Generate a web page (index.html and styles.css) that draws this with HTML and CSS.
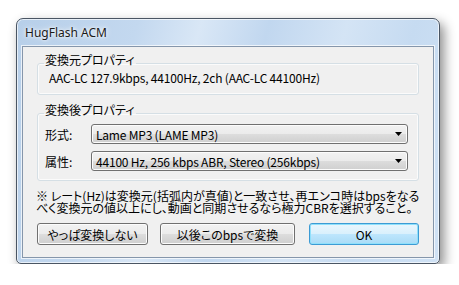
FILE: index.html
```html
<!DOCTYPE html>
<html lang="ja">
<head>
    <meta charset="UTF-8">
    <title>HugFlash ACM</title>
    <link rel="stylesheet" href="styles.css">
</head>
<body>
<div class="window">
    <div class="titlebar">HugFlash ACM</div>
    <div class="client">
        <fieldset class="group src">
            <legend>変換元プロパティ</legend>
            <div class="value">AAC-LC 127.9kbps, 44100Hz, 2ch (AAC-LC 44100Hz)</div>
        </fieldset>
        <fieldset class="group dst">
            <legend>変換後プロパティ</legend>
            <div class="row">
                <span class="label">形式:</span>
                <div class="combo">
                    <span>Lame MP3 (LAME MP3)</span>
                    <svg width="7" height="4" viewBox="0 0 7 4"><path d="M0 0h7L3.5 4z" fill="#000"/></svg>
                </div>
            </div>
            <div class="row">
                <span class="label">属性:</span>
                <div class="combo">
                    <span>44100 Hz, 256 kbps ABR, Stereo (256kbps)</span>
                    <svg width="7" height="4" viewBox="0 0 7 4"><path d="M0 0h7L3.5 4z" fill="#000"/></svg>
                </div>
            </div>
        </fieldset>
        <p class="note">※ レート(Hz)は変換元(括弧内が真値)と一致させ、再エンコ時はbpsをなる<br>べく変換元の値以上にし、動画と同期させるなら極力CBRを選択すること。</p>
        <div class="buttons">
            <button class="btn cancel">やっぱ変換しない</button>
            <button class="btn always">以後このbpsで変換</button>
            <button class="btn ok">OK</button>
        </div>
    </div>
</div>
</body>
</html>
```

FILE: styles.css
```css
*{margin:0;padding:0;box-sizing:border-box;}
body{background:#fff;font-family:"Noto Sans CJK JP","Noto Sans",sans-serif;font-size:12px;color:#000;}

/* aero frame */
.window{width:424px;height:246px;margin:18px 0 0 16px;padding:0 5px 5px 5px;
    border:1px solid #4a5563;border-radius:7px 7px 5px 5px;
    background:linear-gradient(105deg,#b7cfe9 0%,#c3d8ef 25%,#d9e7f6 38%,#c1d7ef 52%,#d4e4f5 68%,#c6dbf1 82%,#d0e2f5 100%);
    box-shadow:inset 0 0 0 1px rgba(255,255,255,.65),4px 5px 12px rgba(0,0,0,.45);
    display:flex;flex-direction:column;}
.titlebar{height:27px;padding:7px 0 0 3px;font-family:"Noto Sans",sans-serif;font-size:12px;line-height:14px;
    color:#1a1a1a;text-shadow:0 0 6px #fff,0 0 3px #fff;}
.client{flex:1;background:#f0f0f0;border:1px solid #8596ab;box-shadow:0 0 0 1px rgba(255,255,255,.7);
    padding:7px 14px 0 14px;display:flex;flex-direction:column;}

/* group boxes */
.group{border:1px solid #d5dfe5;border-radius:3px;padding:0 9px 0 6px;
    box-shadow:inset 0 0 0 1px #fbfbfb;font-feature-settings:"palt";}
.group legend{padding:0 1px 6px 1px;line-height:12px;}
.src{padding-bottom:10px;}
.src .value{margin-left:5px;line-height:12px;letter-spacing:-0.2px;}
.dst{margin-top:9px;padding-top:2px;padding-bottom:9px;}
.row{display:flex;align-items:center;height:20px;}
.row + .row{margin-top:7px;}
.label{width:47px;padding-left:1px;}

.combo{width:317px;height:20px;display:flex;align-items:center;justify-content:space-between;
    padding:0 5px 0 4px;border:1px solid #707070;border-radius:3px;
    background:linear-gradient(#f2f2f2 0%,#ebebeb 50%,#dddddd 50%,#cfcfcf 100%);
    box-shadow:inset 0 0 0 1px #fcfcfc;letter-spacing:-0.2px;}

.note{margin:9px 0 0 -1px;line-height:12px;white-space:nowrap;font-feature-settings:"palt";}

/* buttons */
.buttons{display:flex;margin-top:9px;}
.btn{height:22px;font-family:inherit;font-size:12px;color:#000;
    border:1px solid #707070;border-radius:3px;font-feature-settings:"palt";
    background:linear-gradient(#f2f2f2 0%,#ebebeb 50%,#dddddd 50%,#cfcfcf 100%);
    box-shadow:inset 0 0 0 1px #fcfcfc;}
.cancel{width:111px;}
.always{width:135px;margin-left:12px;}
.ok{width:110px;margin-left:auto;border-color:#3c9bd4;
    background:linear-gradient(#eaf6fd 0%,#d9f0fc 50%,#bee6fd 50%,#a9dbf6 100%);
    box-shadow:inset 0 0 0 1px #8fe0fb;}
```
